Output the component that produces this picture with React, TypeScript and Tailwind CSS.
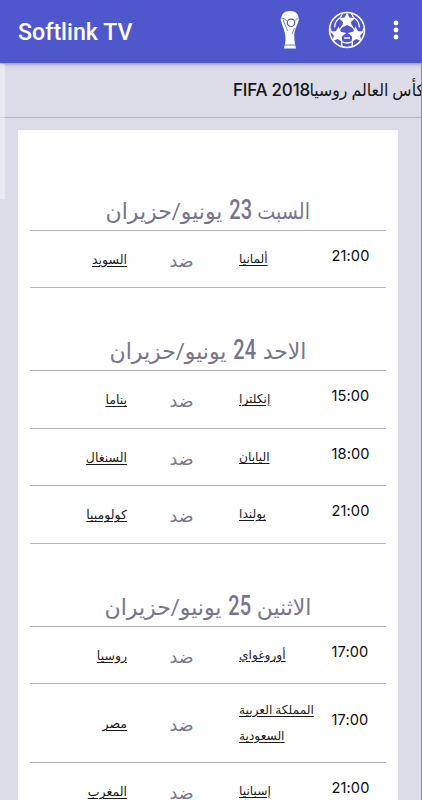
type Match = {
  time: string
  home: string[]
  away: string
  tall?: boolean
}

type MatchDay = {
  weekday: string
  weekdayClass: string
  day: string
  month: string
  matches: Match[]
}

const SCHEDULE: MatchDay[] = [
  {
    weekday: 'السبت',
    weekdayClass: 'w-[51px] scale-x-[0.87]',
    day: '23',
    month: 'يونيو/حزيران',
    matches: [{ time: '21:00', home: ['ألمانيا'], away: 'السويد' }],
  },
  {
    weekday: 'الاحد',
    weekdayClass: 'w-[43px]',
    day: '24',
    month: 'يونيو/حزيران',
    matches: [
      { time: '15:00', home: ['إنكلترا'], away: 'بناما' },
      { time: '18:00', home: ['اليابان'], away: 'السنغال' },
      { time: '21:00', home: ['بولندا'], away: 'كولومبيا' },
    ],
  },
  {
    weekday: 'الاثنين',
    weekdayClass: 'w-[53px]',
    day: '25',
    month: 'يونيو/حزيران',
    matches: [
      { time: '17:00', home: ['أوروغواي'], away: 'روسيا' },
      { time: '17:00', home: ['المملكة العربية', 'السعودية'], away: 'مصر', tall: true },
      { time: '21:00', home: ['إسبانيا'], away: 'المغرب' },
    ],
  },
]

function starPoints(cx: number, cy: number, r: number, rotate: number) {
  return Array.from({ length: 10 }, (_, i) => {
    const radius = i % 2 === 0 ? r : r * 0.5
    const angle = ((rotate - 90 + i * 36) * Math.PI) / 180
    return `${cx + radius * Math.cos(angle)},${cy + radius * Math.sin(angle)}`
  }).join(' ')
}

function TrophyIcon() {
  return (
    <svg width="20" height="38" viewBox="0 0 20 38" fill="none">
      <path
        d="M10 0C14.500 0 18 2 18.500 6.500C19.500 8 18.500 11 17.500 13C16 17 14.300 20 14.200 24C14.200 28 14.800 31 15.200 34L16 37.500H4L4.700 34C5.600 30 5.800 27 5 23C4.300 18 2 14 1 10C0.300 8 0.800 7 1.500 6.500C2 2 5.500 0 10 0Z"
        fill="#fff"
      />
      <circle cx="11" cy="11.800" r="3.700" stroke="#4f57cd" strokeWidth="1.200" />
      <path
        d="M1.500 7.500C3.500 6.800 5 8 7.500 10.500M18.500 7.500C17 7.500 16 8.500 14.500 10M3.300 8.500C4 13 6.500 16 7.500 20M14.500 17L12 23M4.500 34H15.500"
        stroke="#4f57cd"
        strokeWidth="0.800"
      />
    </svg>
  )
}

function BallIcon() {
  return (
    <svg width="38" height="38" viewBox="0 0 38 38" fill="none">
      <circle cx="19" cy="19" r="17.500" stroke="#fff" strokeWidth="1.500" />
      <g stroke="#fff" strokeWidth="1.300">
        <path d="M12.500 6.500Q7 9.500 6.500 16.500M25.500 6.500Q31 9.500 31.500 16.500" />
        <path d="M13.500 30.500Q19 33.500 24.500 30.500" />
        <path d="M14.800 14L12 18.500M23.200 14L26 18.500M16 27H22" />
        <path d="M12.500 6.500L14.500 2.500M25.500 6.500L23.500 2.500M3.500 21.500L2 17M34.500 21.500L36 17M13.500 30.500L14 35.500M24.500 30.500L24 35.500" />
      </g>
      <g fill="#fff">
        <polygon points={starPoints(19, 9.8, 8.4, 0)} />
        <polygon points={starPoints(10, 23.8, 8.4, 5)} />
        <polygon points={starPoints(28, 23.8, 8.4, -5)} />
      </g>
    </svg>
  )
}

function MoreIcon() {
  return (
    <svg width="6" height="20" viewBox="0 0 6 20" fill="#fff">
      <circle cx="3" cy="3" r="2.400" />
      <circle cx="3" cy="10" r="2.400" />
      <circle cx="3" cy="17" r="2.400" />
    </svg>
  )
}

function MatchRow({ match }: { match: Match }) {
  return (
    <div
      className={`flex items-center border-b border-[#b4b4b8] ${match.tall ? 'h-[78.5px]' : 'h-[57.5px]'}`}
    >
      <div dir="rtl" className="flex w-[97px] justify-start pt-[3px] text-[12.5px] text-[#1a1a1a]">
        <span className="underline underline-offset-2">{match.away}</span>
      </div>
      <div dir="rtl" className="w-[112px] pt-1 pr-[3px] text-center text-[17.5px] text-[#77758a]">
        ضد
      </div>
      <div className="w-[92.5px] text-[12.2px] leading-[26px] text-[#1a1a1a]">
        {match.home.map((line) => (
          <div key={line} dir="rtl" className="text-left whitespace-nowrap underline underline-offset-2">
            {line}
          </div>
        ))}
      </div>
      <div className="pb-[4px] font-['Inter'] text-[14.6px] tracking-[0.1px] text-[#0a0a0a]">{match.time}</div>
    </div>
  )
}

export default function App() {
  return (
    <div className="relative h-[800px] w-[422px] overflow-hidden bg-[#dcdbe8] font-['Roboto','DejaVu_Sans',sans-serif]">
      <header className="relative flex h-[63px] items-center bg-[#4f57cd] pb-[3px] pl-[18px] text-white shadow-[0_1px_4px_rgba(40,40,80,0.45)]">
        <h1 className="w-[262px] pt-[5px] text-[23.2px] font-medium">Softlink TV</h1>
        <TrophyIcon />
        <div className="ml-[27.5px]">
          <BallIcon />
        </div>
        <div className="ml-[27.5px]">
          <MoreIcon />
        </div>
      </header>
      <div
        dir="rtl"
        className="flex h-[55px] items-baseline border-b border-[#b9b2c0] text-[#151515]"
      >
        <span className="-mr-[2px] w-[114px] origin-right scale-x-[0.93] text-[17px] leading-[54px] font-medium whitespace-nowrap">
          كأس العالم روسيا
        </span>
        <span className="font-['Inter'] text-[17px] font-medium tracking-[-0.2px] whitespace-nowrap">FIFA 2018</span>
      </div>
      <main className="mt-3 ml-[18px] h-[700px] w-[380px] bg-white px-3">
        {SCHEDULE.map((group, i) => (
          <section key={group.day}>
            <h2
              dir="rtl"
              className={`flex items-end justify-center border-b border-[#b4b4b8] pb-[2px] text-[22px] text-[#77758a] ${i === 0 ? 'h-[100.5px]' : 'h-[83px]'}`}
            >
              <div className="flex items-baseline gap-[7px] whitespace-nowrap">
                <span className={`origin-right ${group.weekdayClass}`}>{group.weekday}</span>
                <span className="w-[23px] origin-right scale-x-[0.74] text-[27px] leading-[36px] font-medium">{group.day}</span>
                <span>{group.month}</span>
              </div>
            </h2>
            {group.matches.map((match) => (
              <MatchRow key={match.home[0]} match={match} />
            ))}
          </section>
        ))}
      </main>
      {/* scroll edge on the left */}
      <div className="absolute top-[64px] left-0 h-[135px] w-[5px] bg-white/40" />
      <div className="absolute top-[63px] right-0 h-[737px] w-px bg-[#8f8e9c]" />
    </div>
  )
}
